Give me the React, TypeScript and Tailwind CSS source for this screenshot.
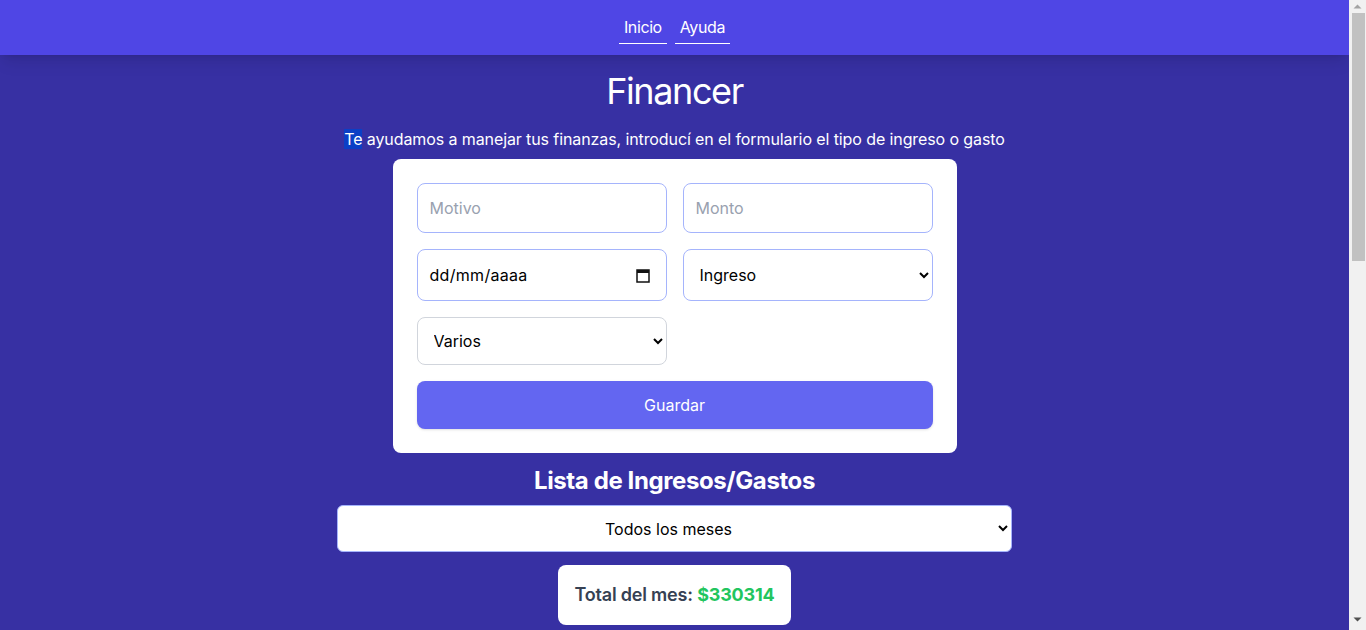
import React from 'react';

const CalendarIcon = () => (
  <svg width="14" height="15" viewBox="0 0 14 15" fill="none">
    <rect x="1" y="2" width="12" height="12" stroke="#111" strokeWidth="1.5" />
    <rect x="1" y="2" width="12" height="3" fill="#111" />
  </svg>
);

// classic scrollbar drawn on the right edge, as in the screenshot
const Scrollbar = () => (
  <div className="w-[17px] h-screen bg-[#f1f1f1] flex flex-col items-center shrink-0">
    <svg width="9" height="13" viewBox="0 0 9 13" className="shrink-0">
      <path d="M0.5 8.5 L4.5 4.5 L8.5 8.5 Z" fill="#a3a3a3" />
    </svg>
    <div className="w-[13px] ml-[2px] mt-0 h-[248px] bg-[#c1c1c1]" />
    <div className="flex-1" />
    <svg width="9" height="17" viewBox="0 0 9 17" className="shrink-0">
      <path d="M0.5 4.5 L8.5 4.5 L4.5 8.5 Z" fill="#505050" />
    </svg>
  </div>
);

export default function App() {
  return (
    <div className="h-screen flex overflow-hidden bg-[#3730a3] font-['Inter','Noto_Sans',sans-serif] text-white">
      <div className="flex-1 min-w-0 h-screen overflow-hidden">
        <header className="h-[55px] bg-[#4f46e5] shadow-lg flex items-center justify-center gap-2 relative z-10">
          <a className="px-[5px] pb-1 pt-1 text-base tracking-[-0.4px] border-b border-white leading-6">Inicio</a>
          <a className="px-[5px] pb-1 pt-1 text-base tracking-[-0.4px] border-b border-white leading-6">Ayuda</a>
        </header>

        <main className="flex flex-col items-center">
          <h1 className="mt-[14px] text-[36px] leading-[44px] font-normal tracking-[-1.4px]">Financer</h1>
          <p className="mt-[16px] text-base leading-5 tracking-[-0.1px]">
            <span className="bg-[#0b3fc6]">Te</span> ayudamos a manejar tus finanzas, introducí en el formulario el tipo de ingreso o gasto
          </p>

          <form className="mt-[10px] w-[564px] bg-white rounded-lg p-6 text-black flex flex-col gap-4">
            <div className="grid grid-cols-2 gap-4">
              <input
                placeholder="Motivo"
                className="h-[50px] rounded-lg border border-[#a5b4fc] px-3 text-base placeholder:text-gray-400 outline-none"
              />
              <input
                placeholder="Monto"
                className="h-[50px] rounded-lg border border-[#a5b4fc] px-3 text-base placeholder:text-gray-400 outline-none"
              />
            </div>
            <div className="grid grid-cols-2 gap-4">
              <div className="h-[52px] rounded-lg border border-[#a5b4fc] px-3 pr-4 flex items-center justify-between text-base">
                <span className="tracking-[0.3px]">dd/mm/aaaa</span>
                <CalendarIcon />
              </div>
              <select className="h-[52px] rounded-lg border border-[#a5b4fc] px-3 text-base bg-white outline-none">
                <option>Ingreso</option>
                <option>Gasto</option>
              </select>
            </div>
            <div className="grid grid-cols-2 gap-4">
              <select className="h-12 rounded-lg border border-gray-300 px-3 text-base bg-white outline-none">
                <option>Varios</option>
                <option>Hogar</option>
                <option>Comida</option>
              </select>
            </div>
            <button type="button" className="h-12 rounded-lg bg-[#6366f1] text-white text-base shadow-sm">
              Guardar
            </button>
          </form>

          <h2 className="mt-[12px] text-2xl leading-8 font-bold tracking-[-0.4px]">Lista de Ingresos/Gastos</h2>
          <select className="mt-[8px] w-1/2 h-[47px] rounded-md border border-[#a5b4fc] bg-white text-black text-base [text-align-last:center] px-2 outline-none">
            <option>Todos los meses</option>
          </select>

          <div className="mt-[13px] w-[233px] h-[60px] bg-white rounded-lg flex items-center justify-center text-lg font-semibold text-gray-700 tracking-[-0.2px]">
            Total del mes:&nbsp;<span className="text-[#22c55e] font-bold">$330314</span>
          </div>
        </main>
      </div>
      <Scrollbar />
    </div>
  );
}
